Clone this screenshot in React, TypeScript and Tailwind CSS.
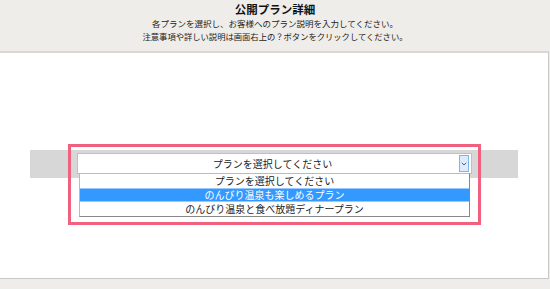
import { ChevronDown } from "lucide-react";

const options = [
  "プランを選択してください",
  "のんびり温泉も楽しめるプラン",
  "のんびり温泉と食べ放題ディナープラン",
];

export default function App() {
  return (
    <main
      className="relative h-[289px] w-[550px] overflow-hidden bg-[#efede9] text-[#222]"
      style={{ fontFamily: '"Noto Sans CJK JP", "Noto Sans", sans-serif' }}
    >
      <header className="flex h-[51px] flex-col items-center pt-[2px]">
        <h1 className="text-[11.5px] font-bold leading-[14px] text-[#111]">
          公開プラン詳細
        </h1>
        <p className="mt-[1px] text-[8.5px] leading-[13px]">
          各プランを選択し、お客様へのプラン説明を入力してください。
        </p>
        <p className="text-[8.3px] leading-[12px]">
          注意事項や詳しい説明は画面右上の？ボタンをクリックしてください。
        </p>
      </header>

      <section className="h-[228px] w-[549px] border-t-2 border-r border-b border-t-[#d9d8d5] border-r-[#c8c8c8] border-b-[#c8c8c8] bg-white">
        <div className="relative ml-[30px] mt-[97px] h-[28px] w-[488px] bg-[#d7d7d7]">
          <div className="absolute left-[38px] top-[-6px] h-[81px] w-[413px] border-[3px] border-[#f0607f]" />

          <div className="absolute left-[47px] top-[3px] flex h-[21px] w-[395px] items-center border border-[#f5b27c] bg-white">
            <span className="flex-1 pl-[8px] text-center text-[10px] leading-none">
              プランを選択してください
            </span>
            <span className="mr-[2px] flex h-[17px] w-[10px] items-center justify-center border border-[#7eb4ea] bg-[#dcecfc]">
              <ChevronDown size={8} strokeWidth={2.5} className="text-[#444]" />
            </span>
          </div>

          <ul className="absolute left-[49px] top-[23px] w-[391px] border border-[#888] border-t-[#bbb] border-l-[#bbb] bg-white">
            {options.map((option, index) => (
              <li
                key={option}
                className={
                  index === 1
                    ? "h-[14px] overflow-hidden border-y border-[#99c9ff] bg-[#3399ff] text-center text-[10px] leading-[12px] text-white"
                    : "h-[14px] overflow-hidden text-center text-[10px] leading-[14px]"
                }
              >
                {option}
              </li>
            ))}
          </ul>
        </div>
      </section>
    </main>
  );
}
